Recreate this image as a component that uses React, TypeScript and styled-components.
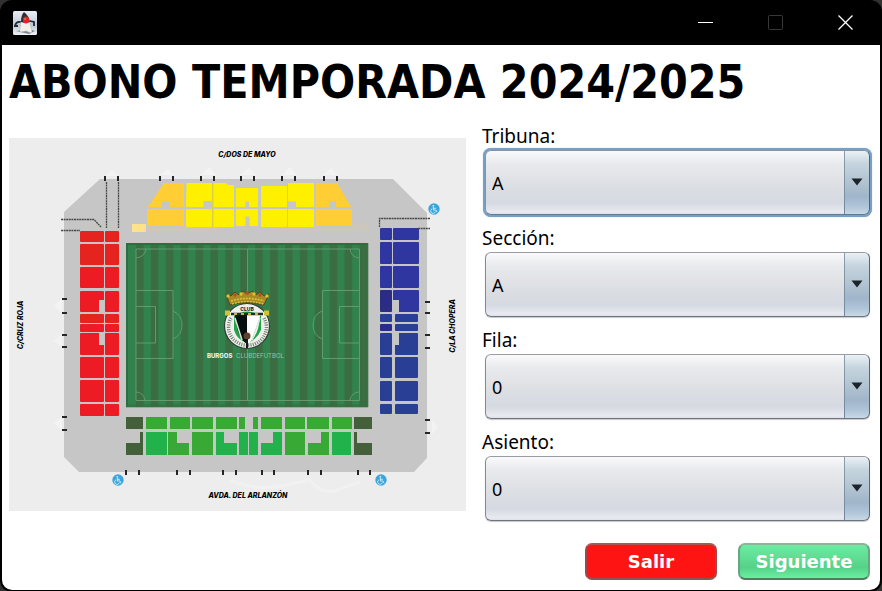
import React, { useId, useState } from "react";
import styled, { createGlobalStyle, css } from "styled-components";

const GlobalStyle = createGlobalStyle`
  *, *::before, *::after { box-sizing: border-box; }
  html, body { margin: 0; background: #33312f; }
  body { font-family: "Noto Sans", Tahoma, sans-serif; color: #000; }
`;

const Window = styled.div`
  display: flex;
  flex-direction: column;
  min-height: 100vh;
  padding: 0 2px 2px;
  background: #000;
  border-radius: 12px;
`;

const TitleBar = styled.header`
  display: flex;
  align-items: center;
  justify-content: space-between;
  height: 45px;
  padding-left: 11px;
`;

const WindowControls = styled.div`
  display: flex;
  height: 100%;
`;

const ControlButton = styled.button`
  display: grid;
  place-items: center;
  width: 70px;
  padding: 0;
  border: 0;
  background: transparent;
  color: #fff;

  &:disabled { color: #383838; }
`;

const Content = styled.main`
  flex: 1;
  padding: 8px 10px 10px 7px;
  background: #fff;
  border-radius: 0 0 10px 10px;
`;

const Title = styled.h1`
  margin: 0;
  font-family: "DejaVu Sans Condensed", "DejaVu Sans", Tahoma, sans-serif;
  font-size: 46px;
  line-height: 58px;
  font-weight: 700;
  white-space: nowrap;
`;

const Columns = styled.div`
  display: grid;
  grid-template-columns: minmax(0, 457fr) minmax(0, 388fr);
  gap: 16px;
  margin-top: 14px;
`;

const StadiumMap = styled.svg`
  display: block;
  width: 100%;
  height: auto;
  margin-top: 13px;
  font-family: Inter, "Open Sans", sans-serif;
  font-size: 7px;
  font-weight: 800;
  font-style: italic;
`;

const Form = styled.form`
  display: flex;
  flex-direction: column;
`;

const Field = styled.div`
  height: 102px;
`;

const Label = styled.label`
  display: block;
  height: 25px;
  font-size: 19px;
  line-height: 22px;
`;

const SelectBox = styled.div`
  position: relative;
  margin-left: 3px;
`;

const Select = styled.select`
  display: block;
  appearance: none;
  width: 100%;
  height: 65px;
  padding: 0 34px 0 6px;
  font-family: inherit;
  font-size: 18px;
  color: #000;
  border: 1px solid #888b92;
  border-color: #999ca2 #5c6673 #70747c #85888e;
  border-radius: 6px;
  outline: none;
  background:
    linear-gradient(#8b9dab, #71879c) right 24px top / 1px 100% no-repeat,
    linear-gradient(#eaf1f5 0%, #c5d4de 20%, #b0c2d0 52%, #a0b5ca 72%, #b0c5d8 88%, #c6d9e7 100%) right top / 24px 100% no-repeat,
    linear-gradient(#fafafc 0%, #e9eaed 20%, #dcdfe3 55%, #d5d9e1 82%, #e8e9f1 96%, #dfe1e8 100%);
  box-shadow: 0 1px 1px #c6c8cc;

  ${({ $active }: { $active?: boolean }) => $active && css`
    border-color: #84939f #40678b #607b95 #8094a8;
    box-shadow: 0 0 0 2px #79a0c4, 0 0 1px 2px #79a0c4;
  `}
`;

const Arrow = styled.svg`
  position: absolute;
  top: 28px;
  right: 7px;
  pointer-events: none;
`;

const Actions = styled.div`
  display: flex;
  justify-content: flex-end;
  gap: 21px;
  margin-top: 10px;
`;

const ActionButton = styled.button<{ $tone: "red" | "green" }>`
  width: 132px;
  height: 37px;
  padding: 0;
  border: 2px solid;
  border-radius: 7px;
  font-family: "DejaVu Sans", Verdana, sans-serif;
  font-size: 18px;
  font-weight: 700;
  line-height: 24px;
  color: #fff;
  ${({ $tone }) => $tone === "red" ? css`
    border-color: #ad5454 #a04848 #8a5555;
    background: #ff1414;
  ` : css`
    border-color: #85b999 #68a582 #4e7c62;
    background: linear-gradient(#6ceba2, #5ddb91 45%, #55d188 68%, #69f0a1);
  `}
`;

const RED_ROWS = [[231, 11], [244, 21], [267, 21], [291, 21], [314, 9], [324, 8], [333, 22], [357, 21], [380, 22], [404, 12]];
const BLUE_ROWS = [[228, 12], [242, 22], [266, 22], [290, 22], [314, 8], [324, 7], [333, 22], [357, 21], [381, 20], [404, 10]];
const SOUTH_UPPER = [[126, 17], [146, 21], [170, 20], [192, 21], [216, 21], [239, 6], [253, 5], [261, 21], [285, 20], [307, 22], [332, 20], [354, 18]];
const TOP_GATES = [105, 118, 160, 173, 201, 214, 241, 254, 282, 295, 324, 337];
const BOTTOM_GATES = [126, 139, 177, 190, 223, 236, 262, 274, 308, 321, 358, 370];
const LEFT_GATES = [298, 312, 334, 346, 416, 429];
const RIGHT_GATES = [302, 313, 335, 348, 420, 433];

function Accessible({ x, y }: { x: number; y: number }) {
  return (
    <g transform={`translate(${x} ${y})`}>
      <circle r="5.7" fill="#3ba5dc" />
      <circle cx="-.7" cy="-3.2" r=".9" fill="#d8effa" />
      <path d="M-.7-2V1H2L3 3.3M-2-.2A2.4 2.4 0 1 0 1.4 2.6M-.5-.7H1.8" fill="none" stroke="#d8effa" strokeWidth=".9" />
    </g>
  );
}

function Pitch() {
  return (
    <g>
      <rect x="126" y="243" width="242" height="164" fill="#31824c" />
      {Array.from({ length: 16 }, (_, i) => (
        <rect key={i} x={136 + i * 14.9} y="243" width="7.5" height="164" fill="#3b6d42" />
      ))}
      <path d="M127 407V244H368" fill="none" stroke="#28713f" strokeWidth="2" />
      <path d="M126 406H368M367 243V407" stroke="#356e42" strokeWidth="3" opacity=".6" />
      <g fill="none" stroke="#72a67c" strokeWidth="1" opacity=".75">
        <path d="M136 249H359.5V400.5H136ZM247.500 249V400M136 290.500H173V358.500H136M136 306.500H155.500V343H136M359 290.500H322.500V358.500H359M359 306.500H339.500V343H359" />
        <path d="M173 311Q182 315 182 325T173 339M322 311Q313 315 313 325T322 339M146 249Q145 257 136 258M350 249Q351 257 359 258M136 392Q143 392 145 400M359 392Q352 392 350 400" />
      </g>
    </g>
  );
}

function Crest() {
  return (
    <g>
      <path d="M230 305L226 294L231 296L235 292L239 295L243 291L247 294L252 291L256 295L260 292L264 296L269 294L264 305Q247 300 230 305Z" fill="#a98b24" stroke="#4b4b1d" />
      <path d="M231 301Q247 296 264 301M232 304Q247 299 263 304" fill="none" stroke="#dfc33d" strokeWidth="1.500" strokeDasharray="2 1" />
      {[228, 235, 241, 247, 254, 260, 267].map((x, i) => (
        <circle key={x} cx={x} cy={296 - Math.min(i, 6 - i)} r="1.700" fill={i % 2 ? "#be4a2d" : "#ddc131"} />
      ))}
      <circle cx="247" cy="326" r="22.500" fill="#eef1eb" stroke="#303d35" strokeWidth="1.200" />
      <path d="M231 318A18 18 0 0 0 247 345A18 18 0 0 0 264 318" fill="none" stroke="#6f7b71" strokeWidth="3.500" strokeDasharray="1 1.300" />
      <path d="M234 316Q247 307 261 316V330Q257 340 247 343Q237 340 234 330Z" fill="#25a34a" />
      <path d="M235 315H247V344Q237 338 235 315Z" fill="#071010" />
      <path d="M247 315H260Q259 337 247 344Z" fill="#fff" />
      <path d="M235 318L242 340M260 318L252 340" stroke="#dbe6db" strokeWidth="1.500" />
      <path d="M225 313H230M264 313H269" stroke="#d5c32d" strokeWidth="5" />
      <path d="M231 314H263" stroke="#202f26" strokeWidth="2.500" />
      <path d="M234 314H260" stroke="#c9b731" strokeWidth="2" strokeDasharray="3 4" />
      <circle cx="247" cy="336" r="3.500" fill="#63402b" />
      <path d="M247 339V348" stroke="#151b16" strokeWidth="2" />
      <text x="247" y="311" textAnchor="middle" fontSize="5" fill="#1d2521" fontStyle="normal">CLUB</text>
      <text x="207" y="358" fontSize="6" fill="#e8f2e9" fontStyle="normal">BURGOS</text>
      <text x="236" y="358" fontSize="6" fill="#9bc4a4" fontStyle="normal" fontWeight="400">CLUBDEFÚTBOL</text>
    </g>
  );
}

function Stadium() {
  return (
    <StadiumMap viewBox="9 138 457 373" role="img" aria-label="Plano del estadio">
      <rect x="9" y="138" width="457" height="373" fill="#ededed" />
      <path d="M105 176L112 170L119 176M160 175L168 169L174 175M201 175L209 167L216 175M241 175L249 168L256 175M282 175L290 167L297 175M324 175L331 168L338 175M62 298L54 306L62 313M62 334L54 341L62 347M62 416L54 423L62 430M432 420L438 427L432 434" fill="#f3f3f3" />
      <path d="M310 480Q324 498 342 488L360 482M230 480Q260 493 290 484L310 480" fill="none" stroke="#f1f1f1" strokeWidth="3" />
      <path d="M100 179H393L427 213V458L414 472H79L64 457V212Z" fill="#c6c6c6" />

      <path d="M164 183H182Q184 183 184 185V207H170V201H162V207H148Z" fill="#ffcd34" />
      <rect x="147" y="209" width="37" height="17" fill="#ffcd34" />
      <path d="M316 183H337L351 207H336V201H329V207H316Z" fill="#ffcd34" />
      <rect x="316" y="209" width="36" height="17" fill="#ffcd34" />
      <g fill="#fff000" stroke="#fff000" strokeWidth="1" strokeLinejoin="round">
        <path d="M187 183.500H211.500V200.500H203V206.500H186.500ZM214 183.500H226L228 185.500H233.500V206.500H214ZM236.500 188.500H257.500V206.500H249.500V201H245V206.500H236.500ZM261.500 186.500H286.500V206.500H261.500ZM288.500 183.500H313.500V206.500H296.500V201H288.500Z" />
        <path d="M186.500 209.500H211.500V226.500H186.500ZM214 209.500H233.500V226.500H214ZM236.500 209.500H257.500V225.500H250V216H245V225.500H236.500ZM261.500 209.500H286.500V226.500H261.500ZM288.500 209.500H313.500V226.500H288.500Z" />
      </g>
      <path d="M212.500 183V227M287.500 183V227" stroke="#d8cf4a" />
      <rect x="132" y="224" width="14" height="8" fill="#ffe18b" />
      <path d="M147 227H220V231H147ZM278 227H316V231H278ZM316 227H352V223H367V231H316Z" fill="#d2c8b2" opacity=".5" />

      {RED_ROWS.map(([y, h], i) => (
        <g key={y} fill={i < 2 || i === 4 ? "#e52420" : "#ed1c24"}>
          <rect x="80" y={y} width="24" height={h} rx="1" />
          <rect x="105" y={y} width="14" height={h} rx="1" />
        </g>
      ))}
      <path d="M99 300H104V313H99ZM99 333H104V345H99Z" fill="#c6c6c6" />
      {BLUE_ROWS.map(([y, h], i) => (
        <g key={y} fill={i < 4 ? "#3036a0" : "#293f95"}>
          <rect x="380" y={y} width="12" height={h} rx="1" fill={i === 3 ? "#2a2d82" : i === 5 ? "#292b8f" : undefined} />
          <rect x={i < 4 ? 393 : 395} y={y} width={i < 4 ? 26 : 23} height={h} rx="1" />
        </g>
      ))}
      <path d="M393 300H399V312H393ZM394 333H399V345H394Z" fill="#c6c6c6" />

      <Pitch />
      <Crest />

      {SOUTH_UPPER.map(([x, w], i) => (
        <rect key={x} x={x} y="417" width={w} height="12" fill={i === 0 || i === 11 ? "#43603b" : "#38a935"} />
      ))}
      <path d="M140 432H143V455H126V443H140ZM354 432H357V443H372V455H354Z" fill="#43603b" />
      <path d="M168 432H177V443H189V455H168ZM192 432H213V455H192ZM285 432H305V455H285ZM321 432H329V455H308V443H321Z" fill="#38a935" />
      <path d="M146 432H167V455H146ZM216 432H224V443H237V455H216ZM239 432H248V455H239ZM249 432H258V455H249ZM273 432H282V455H261V443H273ZM332 432H351V455H332Z" fill="#22b24c" />

      <g fill="#262626">
        {TOP_GATES.map(x => <rect key={x} x={x - 1} y="176" width="2" height="5" />)}
        {BOTTOM_GATES.map(x => <rect key={x} x={x - 1} y="470" width="2" height="5" />)}
        {LEFT_GATES.map(y => <rect key={y} x="62" y={y} width="5" height="2" />)}
        {RIGHT_GATES.map(y => <rect key={y} x="425" y={y - 1} width="5" height="2" />)}
      </g>
      <path d="M106.500 182V228M118.500 182V228M61 219.500H94L101 227M61 230.500H80M430 218.500H379.500V227M418 228.500H430" fill="none" stroke="#484848" strokeWidth="1.300" strokeDasharray="2 .6" />
      <Accessible x={434} y={209} />
      <Accessible x={118} y={480} />
      <Accessible x={381} y={480} />
      <text x="247" y="157" textAnchor="middle">C/DOS DE MAYO</text>
      <text x="248" y="498" textAnchor="middle">AVDA. DEL ARLANZÓN</text>
      <text transform="translate(23 325) rotate(-90)" textAnchor="middle">C/CRUZ ROJA</text>
      <text transform="translate(455 326) rotate(-90)" textAnchor="middle">C/LA CHOPERA</text>
    </StadiumMap>
  );
}

function DukeIcon() {
  return (
    <svg width="24" height="24" viewBox="0 0 24 24" aria-hidden="true">
      <defs>
        <linearGradient id="dukeSky" x2="0" y2="1">
          <stop stopColor="#e9edf5" /><stop offset=".6" stopColor="#bdc9d8" /><stop offset="1" stopColor="#f1f3f6" />
        </linearGradient>
      </defs>
      <rect width="24" height="24" rx="1.500" fill="url(#dukeSky)" />
      <path d="M3 20L16 23L22 20L16 18Z" fill="#7e8791" />
      <path d="M8 11Q3 10 2 15L5 15M17 10L21 11L21 15" fill="none" stroke="#202a33" strokeWidth="1.800" />
      <path d="M8 10L7 17Q6 21 8 21L13 20L18 22Q20 21 18 16L16 9Z" fill="#f3f0e9" stroke="#a9a9a9" strokeWidth=".5" />
      <path d="M11 1Q16 5 17 11L12 12L8 11Q8 4 11 1Z" fill="#302c31" />
      <ellipse cx="13" cy="9" rx="3.200" ry="3.500" fill="#da2629" />
      <circle cx="12" cy="8" r="1" fill="#f16559" />
    </svg>
  );
}

function SelectField({ label, options, active }: { label: string; options: string[]; active?: boolean }) {
  const id = useId();
  const [value, setValue] = useState(options[0]);
  return (
    <Field>
      <Label htmlFor={id}>{label}</Label>
      <SelectBox>
        <Select id={id} value={value} onChange={e => setValue(e.target.value)} $active={active}>
          {options.map(option => <option key={option}>{option}</option>)}
        </Select>
        <Arrow width="12" height="8" viewBox="0 0 12 8" aria-hidden="true">
          <path d="M.5 .5H11.500L6 7.500Z" fill="#1c232b" />
        </Arrow>
      </SelectBox>
    </Field>
  );
}

export default function App() {
  return (
    <>
      <GlobalStyle />
      <Window>
        <TitleBar>
          <DukeIcon />
          <WindowControls>
            <ControlButton type="button" aria-label="Minimizar">
              <svg width="15" height="15"><path d="M0 7.500H15" stroke="currentColor" /></svg>
            </ControlButton>
            <ControlButton type="button" aria-label="Maximizar" disabled>
              <svg width="15" height="15"><rect x=".5" y=".5" width="14" height="14" rx="1" fill="none" stroke="currentColor" /></svg>
            </ControlButton>
            <ControlButton type="button" aria-label="Cerrar">
              <svg width="15" height="15"><path d="M.5 .5L14.500 14.500M14.500 .5L.5 14.500" stroke="currentColor" strokeWidth="1.300" /></svg>
            </ControlButton>
          </WindowControls>
        </TitleBar>
        <Content>
          <Title>ABONO TEMPORADA 2024/2025</Title>
          <Columns>
            <Stadium />
            <Form onSubmit={e => e.preventDefault()}>
              <SelectField label="Tribuna:" options={["A", "B", "C", "D"]} active />
              <SelectField label="Sección:" options={["A", "B", "C", "D"]} />
              <SelectField label="Fila:" options={["0", "1", "2", "3"]} />
              <SelectField label="Asiento:" options={["0", "1", "2", "3"]} />
              <Actions>
                <ActionButton type="button" $tone="red">Salir</ActionButton>
                <ActionButton type="submit" $tone="green">Siguiente</ActionButton>
              </Actions>
            </Form>
          </Columns>
        </Content>
      </Window>
    </>
  );
}
